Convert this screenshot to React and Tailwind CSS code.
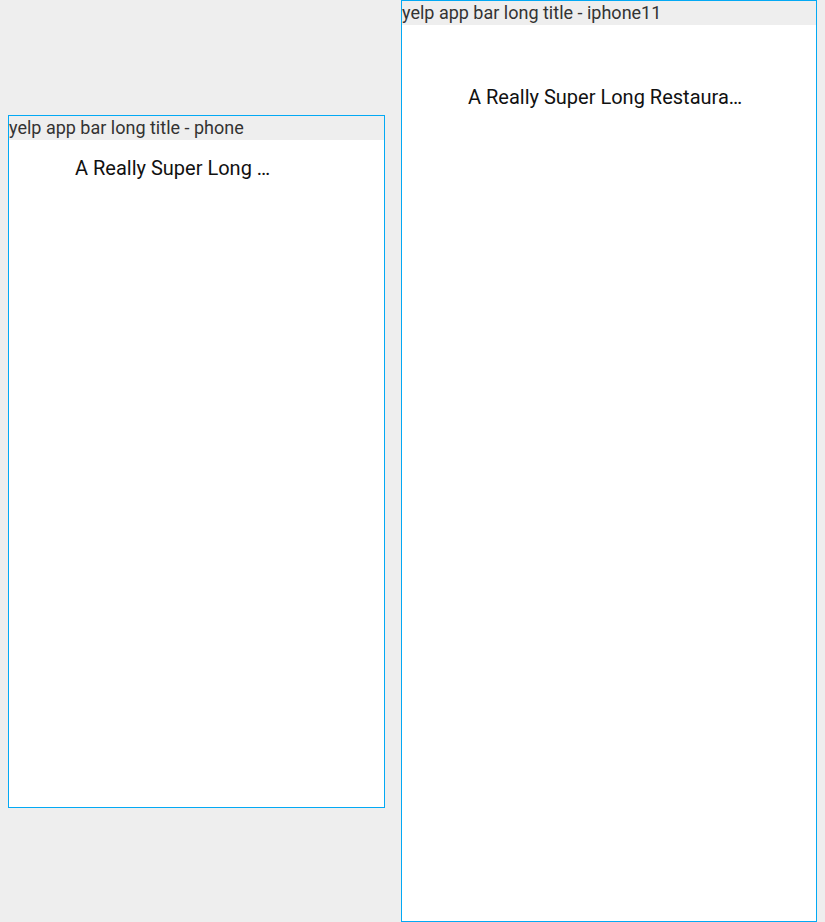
import React from "react";

const FRAMES = [
  { label: "yelp app bar long title - phone", width: 375, height: 667, safeTop: 0, title: "A Really Super Long …" },
  { label: "yelp app bar long title - iphone11", width: 414, height: 896, safeTop: 44, title: "A Really Super Long Restaura…" },
];

const DeviceFrame = ({ frame }) => (
  <div className="m-2 border border-[#03a9f4] bg-white flex flex-col">
    <div className="h-6 bg-[#eeeeee] text-[18px] leading-6 text-[#333333] whitespace-nowrap">
      {frame.label}
    </div>
    <div style={{ width: frame.width, height: frame.height }} className="flex flex-col">
      <div style={{ height: frame.safeTop }} />
      <div className="h-14 flex items-center pl-[66px]">
        <span className="text-[20px] text-[#111111] whitespace-nowrap">{frame.title}</span>
      </div>
    </div>
  </div>
);

export default function App() {
  return (
    <div
      className="w-[825px] h-[922px] bg-[#eeeeee] flex items-center overflow-hidden"
      style={{ fontFamily: "Roboto, sans-serif" }}
    >
      {FRAMES.map((f) => (
        <DeviceFrame key={f.label} frame={f} />
      ))}
    </div>
  );
}
